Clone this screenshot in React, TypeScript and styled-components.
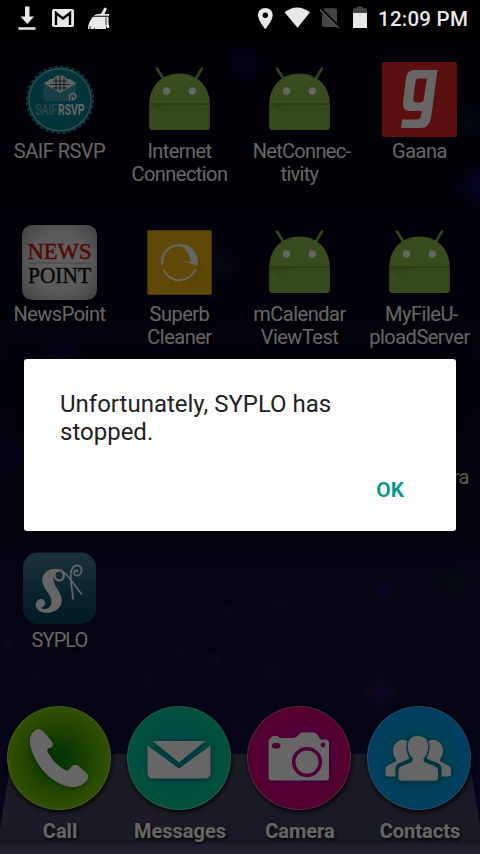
import React from 'react';
import styled, { createGlobalStyle } from 'styled-components';

const GlobalStyle = createGlobalStyle`
  html, body { margin: 0; padding: 0; background: #000; }
  *, *::before, *::after { box-sizing: border-box; }
  svg { display: block; }
`;

const Screen = styled.div`
  position: relative;
  width: 480px;
  height: 854px;
  overflow: hidden;
  display: flex;
  flex-direction: column;
  font-family: Roboto, "Liberation Sans", sans-serif;
  background:
    radial-gradient(circle at 245px 64px, rgba(14, 8, 120, 0.5), transparent 20px),
    radial-gradient(circle at 480px 186px, rgba(14, 8, 150, 0.6), transparent 24px),
    radial-gradient(circle at 470px 122px, rgba(10, 40, 70, 0.4), transparent 22px),
    radial-gradient(circle at 222px 265px, rgba(10, 40, 90, 0.4), transparent 16px),
    radial-gradient(circle at 60px 357px, rgba(20, 12, 110, 0.5), transparent 22px),
    radial-gradient(circle at 18px 457px, rgba(20, 12, 110, 0.5), transparent 20px),
    radial-gradient(circle at 384px 591px, rgba(50, 20, 120, 0.5), transparent 16px),
    radial-gradient(circle at 453px 583px, rgba(14, 50, 60, 0.5), transparent 16px),
    radial-gradient(circle at 282px 603px, rgba(36, 20, 110, 0.5), transparent 13px),
    radial-gradient(circle at 270px 671px, rgba(50, 20, 100, 0.5), transparent 14px),
    radial-gradient(circle at 380px 692px, rgba(60, 20, 130, 0.6), transparent 19px),
    radial-gradient(circle at 235px 731px, rgba(44, 18, 110, 0.4), transparent 14px),
    radial-gradient(circle at 214px 659px, rgba(44, 22, 90, 0.6), transparent 9px),
    radial-gradient(circle at 180px 652px, rgba(40, 22, 80, 0.6), transparent 7px),
    radial-gradient(circle at 150px 680px, rgba(44, 22, 90, 0.6), transparent 9px),
    radial-gradient(circle at 35px 676px, rgba(40, 22, 80, 0.6), transparent 9px),
    radial-gradient(circle at 229px 610px, rgba(40, 22, 80, 0.6), transparent 9px),
    radial-gradient(circle at 8px 646px, rgba(44, 22, 90, 0.6), transparent 8px),
    linear-gradient(#04020f 0, #070518 200px, #0b0922 400px, #0d0c2a 600px, #0f0e34 700px, #100e40 755px, #100e40 100%);
`;

const Floor = styled.svg`
  position: absolute;
  left: 0;
  bottom: 0;
`;

const StatusBar = styled.header`
  position: relative;
  z-index: 3;
  flex: none;
  height: 38px;
  display: flex;
  align-items: center;
  justify-content: space-between;
  background: #000;
`;

const StatusGroup = styled.div`
  display: flex;
  align-items: center;
  height: 38px;
`;

const Clock = styled.span`
  width: 102px;
  font-size: 20.5px;
  font-weight: 500;
  line-height: 38px;
  letter-spacing: 0.25px;
  color: #e8e8e8;
  white-space: nowrap;
`;

const AppGrid = styled.main`
  flex: none;
  height: 668px;
  padding-top: 24px;
  display: grid;
  grid-template-columns: repeat(4, 120px);
  grid-auto-rows: 163px;
`;

const AppCell = styled.div`
  display: flex;
  flex-direction: column;
  align-items: center;
  padding-right: 1px;
`;

const AppIcon = styled.div`
  width: 75px;
  height: 78px;
`;

const AppLabel = styled.span<{ $tight?: number; $edge?: boolean; $indent?: number }>`
  font-size: 20px;
  line-height: 23px;
  color: #fff;
  text-align: center;
  text-indent: ${(p) => p.$indent ?? 0}px;
  white-space: pre;
  letter-spacing: ${(p) => p.$tight ?? -0.5}px;
  align-self: ${(p) => (p.$edge ? 'flex-end' : 'center')};
  padding-right: ${(p) => (p.$edge ? 10 : 0)}px;
  text-shadow: 1px 2px 3px #000;
`;

const Dock = styled.nav`
  position: relative;
  display: grid;
  grid-template-columns: repeat(4, 120px);
`;

const DockItem = styled.div`
  display: flex;
  flex-direction: column;
  align-items: center;
  padding-right: 2px;
`;

const DockButton = styled.div<{ $inner: string; $mid: string; $outer: string }>`
  width: 104px;
  height: 104px;
  border-radius: 50%;
  border: 1px solid rgba(255, 255, 255, 0.35);
  background: radial-gradient(circle, ${(p) => p.$inner} 0, ${(p) => p.$mid} 40%, ${(p) => p.$outer} 70%);
  background-origin: border-box;
  box-shadow: 1px 2px 5px rgba(0, 0, 0, 0.9);
  svg { margin: -1px; filter: drop-shadow(0 1px 2px rgba(0, 0, 0, 0.4)); }
`;

const DockLabel = styled.span`
  margin-top: 10px;
  padding-left: 2px;
  font-size: 20px;
  font-weight: 700;
  line-height: 23px;
  color: #fff;
  text-shadow: 1px 2px 4px #000;
`;

const Scrim = styled.div`
  position: absolute;
  inset: 0;
  z-index: 2;
  background: rgba(0, 0, 0, 0.6);
`;

const Dialog = styled.section`
  position: absolute;
  z-index: 4;
  left: 24px;
  top: 359px;
  width: 432px;
  height: 172px;
  padding: 31px 36px 0;
  display: flex;
  flex-direction: column;
  border-radius: 3px;
  background: #fff;
  box-shadow: 0 6px 20px rgba(0, 0, 0, 0.6);
`;

const DialogMessage = styled.p`
  margin: 0;
  width: 310px;
  font-size: 24px;
  line-height: 28px;
  color: #212121;
`;

const DialogActions = styled.div`
  display: flex;
  justify-content: flex-end;
  margin-top: 26px;
`;

const DialogButton = styled.button`
  border: 0;
  margin: 0;
  padding: 6px 16px 6px 12px;
  background: transparent;
  font-family: inherit;
  font-size: 21px;
  font-weight: 600;
  line-height: 25px;
  color: #009688;
`;

const AndroidIcon = ({ id }: { id: string }) => (
  <svg width="75" height="76" viewBox="0 0 75 76">
    <defs>
      <linearGradient id={id} x1="0" y1="0" x2="1" y2="1">
        <stop offset="0" stopColor="#6f9c38" />
        <stop offset=".55" stopColor="#8bc34a" stopOpacity="0" />
      </linearGradient>
    </defs>
    <path d="M15 6.500 21.500 17M60 6.500 53.500 17" stroke="#7fae45" strokeWidth="2.600" strokeLinecap="round" />
    <path d="M7.300 42C7.300 24 20 11.500 37.500 11.500S67.700 24 67.700 42V64.500Q67.700 68 64 68H11Q7.300 68 7.300 64.500Z" fill="#8cbd4b" />
    <path d="M7.300 42H67.700V64.500Q67.700 68 64 68H11Q7.300 68 7.300 64.500Z" fill="#87b849" />
    <path d="M8 42H67V68H33Z" fill={`url(#${id})`} />
    <path d="M7.300 42H67.700" stroke="#5f8531" strokeWidth="1" />
    <circle cx="24.500" cy="29" r="3.700" fill="#fff" />
    <circle cx="50.300" cy="29" r="3.700" fill="#fff" />
  </svg>
);

const SaifIcon = () => (
  <svg width="75" height="75" viewBox="0 0 75 75">
    <circle cx="38" cy="37.800" r="32.700" fill="#078493" />
    <circle cx="38" cy="37.800" r="32.800" fill="none" stroke="#078493" strokeWidth="3" strokeDasharray="3.400 2.320" />
    <circle cx="38" cy="37.800" r="31" fill="none" stroke="#93c5cc" strokeWidth="1.200" />
    <path d="M21.300 22V36.500Q21.300 39 24 39H51.500Q54 39 54 36.500V22L38 30.500Z" fill="#3f9dac" />
    <path d="M22 21.500 28 17H31L35 13.500H41L45 17H48L54.500 21.500 46 26.500 38 31 30 26.500Z" fill="#f4f4f4" />
    <path d="M31 19H45M28 22.500H48M31 26H45M34 16V28M38 14V29M42 16V28" stroke="#37545a" strokeWidth="1.100" />
    <path d="M47.500 38.500V35Q48 31.500 51 31.500T54 34.500 50.500 37.500M50.500 38.500V34.500" fill="none" stroke="#fff" strokeWidth="1.300" />
    <text x="13" y="53" fontFamily="Roboto, sans-serif" fontSize="14" textLength="22.500" lengthAdjust="spacingAndGlyphs" fill="#7db9c2">SAIF</text>
    <text x="36" y="53" fontFamily="Roboto, sans-serif" fontSize="14" fontWeight="700" textLength="26.500" lengthAdjust="spacingAndGlyphs" fill="#fff">RSVP</text>
  </svg>
);

const GaanaIcon = () => (
  <svg width="75" height="75" viewBox="0 0 75 75">
    <rect width="75" height="75" rx="2" fill="#e02a2b" />
    <path fillRule="evenodd" fill="#fff" d="M32 8H55.500L49 56Q47.300 66 38 66H19L20.200 57.500H34.500Q38.500 57.500 39.200 53L39.800 49H28Q20 49 21 40.500L24 16.500Q25 8 32 8ZM37 16.500Q34 16.500 33.500 19.500L31.300 36.500Q31 40.500 34 40.500H38Q41 40.500 41.700 37.500L45 16.500Z" />
  </svg>
);

const NewsPointIcon = () => (
  <svg width="75" height="75" viewBox="0 0 75 75">
    <defs>
      <radialGradient id="paper" cx=".5" cy=".5" r=".7">
        <stop offset="0" stopColor="#f4f4f4" />
        <stop offset=".6" stopColor="#dedede" />
        <stop offset="1" stopColor="#9b9b9b" />
      </radialGradient>
    </defs>
    <rect width="75" height="75" rx="10" fill="url(#paper)" />
    <text x="5.500" y="33.500" fontFamily="Liberation Serif, serif" fontSize="23.500" textLength="64" lengthAdjust="spacingAndGlyphs" fill="#d8100e" stroke="#d8100e" strokeWidth=".5">NEWS</text>
    <path d="M6 38H69.500" stroke="#aaa" strokeWidth="1.200" />
    <text x="6" y="58" fontFamily="Liberation Serif, serif" fontSize="22.500" textLength="63" lengthAdjust="spacingAndGlyphs" fill="#111" stroke="#111" strokeWidth=".4">POINT</text>
  </svg>
);

const SuperbIcon = () => (
  <svg width="75" height="75" viewBox="0 0 75 75">
    <rect x="5.300" y="5.300" width="64.400" height="64.400" rx="1.500" fill="#efb60f" />
    <path d="M56 35 66 46V58L54 66 38 55Q54 52 56 35Z" fill="#e0a60c" opacity=".5" />
    <path d="M19.300 40A17.500 17.500 0 0 1 37 19.200C49 18.500 57 28 55.800 40.500L38.500 36.200 49 37C47 26 42 21 36 21.300 26 22 21 30 21 40Z" fill="#fff" />
    <path d="M21.500 44.500A17.300 17.300 0 0 0 53.700 44" fill="none" stroke="#fff" strokeWidth="1.900" />
  </svg>
);

const SyploIcon = () => (
  <svg width="75" height="75" viewBox="0 0 75 75">
    <defs>
      <linearGradient id="syplo" x1="0" y1="0" x2="0" y2="1">
        <stop offset="0" stopColor="#467f94" />
        <stop offset=".5" stopColor="#1d5f76" />
        <stop offset="1" stopColor="#03445a" />
      </linearGradient>
    </defs>
    <rect x="1" y="1.500" width="73" height="71.500" rx="15" fill="url(#syplo)" />
    <path d="M38 18.500C29 16 20.300 21 20.300 29C20.300 38 29.500 42.500 29.500 50.500C29.500 57.500 23 60 18.500 56.500C23.500 56.500 25 49.500 20 48C15 47 12.500 52.500 14.500 57C18.500 64 33.500 63.500 38.500 54.500C43.500 44 32 37 31.500 28.500C31.200 23.500 33.500 21 38 20.500Z" fill="#fff" />
    <path d="M33 22C31 28 37 31.500 40.500 28C43.500 24 41 18.800 36 19.300" fill="none" stroke="#fff" strokeWidth="2.100" strokeLinecap="round" />
    <path d="M39 19.500C45 21.500 50 31 59.500 43" fill="none" stroke="#fff" strokeWidth="1.600" strokeLinecap="round" />
    <path d="M51.200 48C50 40 48.500 30 48.800 23C49.500 13.500 57.500 12 59.300 17.500C60.500 24 53.500 27 52 22.500C51.800 19.500 54.500 18.500 55.500 20.500" fill="none" stroke="#fff" strokeWidth="1.700" strokeLinecap="round" />
  </svg>
);

const PhoneGlyph = () => (
  <svg width="104" height="104" viewBox="0 0 104 104">
    <path fill="#fff" d="M26.500 25.500Q32 20.500 37 26L44.500 35Q47 38 44.500 41.500Q39 42 40.800 46.500Q48 59 59 64.500Q61 65 63 62.500Q66 57 71 59.500L79 66.500Q83 70 80 74.500Q73 83 61 80.500Q42 76 30 56Q22 42 23 33.500Q23.500 28 26.500 25.500Z" />
  </svg>
);

const MailGlyph = () => (
  <svg width="104" height="104" viewBox="0 0 104 104">
    <path fill="#fff" d="M25.500 35H78.500L52 56.500ZM20.500 39.500 52 62.500 83.500 39.500V67Q83.500 72.500 78 72.500H26Q20.500 72.500 20.500 67Z" />
  </svg>
);

const CameraGlyph = () => (
  <svg width="104" height="104" viewBox="0 0 104 104">
    <path fill="#fff" d="M26 30H30Q32 30 32.500 32H46Q50 31.500 52.500 27.500Q53.500 26.500 56 26.500H67Q69 26.500 71 29.500L73.500 33.500H79Q82 34 82 37V71.500Q82 74.500 79 74.500H24.500Q21.500 74.500 21.500 71.500V35Q21.500 32.500 24 32Q24.500 30 26 30Z" />
    <rect x="25" y="37" width="8.500" height="5.500" rx="2.700" fill="#d0008a" />
    <circle cx="76" cy="39" r="2.400" fill="#d0008a" />
    <circle cx="60" cy="56" r="13.300" fill="#fff" stroke="#c8008e" strokeWidth="3.600" />
  </svg>
);

const PeopleGlyph = () => (
  <svg width="104" height="104" viewBox="0 0 104 104">
    <g fill="#fff">
      <path d="M41 36Q36 31.500 30 36Q23.500 42 27.500 51Q30 54 28.500 55.500L20 60Q18.500 61 18.500 63.500V68Q18.500 70.500 21 70.500H28.500V61.500Q29 58.500 33 57L42.500 52.500Q38 45 41 36Z" />
      <path d="M60.500 36Q66 31.500 72 36Q78.500 42 74.500 51Q72 54 73.500 55.500L82 60Q84 61 84 63.500V68Q84 70.500 81.500 70.500H74.500V61.500Q74 58.500 70 57L59.500 52.500Q64 45 60.500 36Z" />
      <path stroke="#0098b8" strokeWidth="3" paintOrder="stroke" d="M51 30C43 30 40 36 41 43Q42 49 45.500 52Q46.500 55 44 56.500L34 60.500Q31.500 62 31.500 65V71.500Q31.500 74.500 34.500 74.500H68Q71 74.500 71 71.500V65Q71 62 68.500 60.500L58 56.500Q55.500 55 57 52Q60 49 61 43C62 36 59 30 51 30Z" />
    </g>
  </svg>
);

const NotificationIcons = () => (
  <svg width="120" height="38" viewBox="0 0 120 38" fill="#e8e8e8">
    <path d="M25 6.500H29.500V16.500H34L27.300 24 20.500 16.500H25ZM18.500 27.300H35.500V29.800H18.500Z" />
    <rect x="52" y="9" width="22" height="18" rx="2" />
    <path d="M56 25V13L63 18.500 70 13V25" fill="none" stroke="#000" strokeWidth="2.400" />
    <path d="M104.500 7.500 107 8.500 104.500 14H109V15.800H93.500Q96 13.500 101 13.700ZM93 16.800H108.500V23L109.500 28H107L106 25.500V29H95L94.500 27.500 93.500 29H88Q88 22 93 16.800Z" />
    <path d="M106 17.500V25M90 26V29" stroke="#333" strokeWidth="1" />
  </svg>
);

const SystemIcons = () => (
  <svg width="120" height="38" viewBox="0 0 120 38" fill="#e8e8e8">
    <path fillRule="evenodd" d="M7.300 8C3 8 0 11 0 15.200C0 20.500 7.300 29 7.300 29S14.700 20.500 14.700 15.200C14.700 11 11.600 8 7.300 8ZM7.300 12.600A2.700 2.700 0 1 1 7.300 18A2.700 2.700 0 1 1 7.300 12.600Z" />
    <path d="M26.500 12.300Q39 2.500 52 12.300L39.500 27.800Z" />
    <path d="M66 8.300H77Q79 8.300 79 10.300V25Q79 27 77 27H66Q64 27 64 25V14Z" fill="#444" />
    <path d="M63.500 9.500 81 27" stroke="#000" strokeWidth="2.500" />
    <path d="M62 9.500 80.500 28" stroke="#555" strokeWidth="1.600" />
    <path d="M99 6.500H104.500V8.300H109V13H95V8.300H99Z" fill="#444" />
    <path d="M95 13H109V28H95Z" />
  </svg>
);

type App = { label: string; icon?: React.ReactNode; tight?: number; edge?: boolean; indent?: number };

const apps: App[] = [
  { label: 'SAIF RSVP', icon: <SaifIcon />, tight: -0.5 },
  { label: 'Internet\nConnection', icon: <AndroidIcon id="fold-a" />, tight: -0.55 },
  { label: 'NetConnec-\ntivity', icon: <AndroidIcon id="fold-b" />, tight: -0.7, indent: 4 },
  { label: 'Gaana', icon: <GaanaIcon /> },
  { label: 'NewsPoint', icon: <NewsPointIcon /> },
  { label: 'Superb\nCleaner', icon: <SuperbIcon /> },
  { label: 'mCalendar\nViewTest', icon: <AndroidIcon id="fold-c" /> },
  { label: 'MyFileU-\nploadServer', icon: <AndroidIcon id="fold-d" />, indent: 4 },
  { label: '' },
  { label: '' },
  { label: '' },
  { label: 'ra', edge: true },
  { label: 'SYPLO', icon: <SyploIcon />, tight: -0.9 },
];

const dock = [
  { label: 'Call', inner: '#008010', mid: '#4aa800', outer: '#7cc800', glyph: <PhoneGlyph /> },
  { label: 'Messages', inner: '#009cc0', mid: '#00bca4', outer: '#00cc90', glyph: <MailGlyph /> },
  { label: 'Camera', inner: '#cc00b8', mid: '#d40098', outer: '#d0006e', glyph: <CameraGlyph /> },
  { label: 'Contacts', inner: '#00acac', mid: '#00a4d8', outer: '#009cf4', glyph: <PeopleGlyph /> },
];

export default function App() {
  return (
    <>
      <GlobalStyle />
      <Screen>
        <Floor width="480" height="100" viewBox="0 0 480 100">
          <path d="M12 0H468L480 70V100H0V76Z" fill="#42435a" />
          <path d="M190 75Q225 65 252 42T330 0H12L0 76Z" fill="#484a60" opacity=".5" />
          <path d="M0 90H480V100H0Z" fill="#50526f" />
        </Floor>
        <StatusBar>
          <StatusGroup><NotificationIcons /></StatusGroup>
          <StatusGroup>
            <SystemIcons />
            <Clock>12:09 PM</Clock>
          </StatusGroup>
        </StatusBar>
        <AppGrid>
          {apps.map((app, i) => (
            <AppCell key={i}>
              <AppIcon>{app.icon}</AppIcon>
              <AppLabel $tight={app.tight} $edge={app.edge} $indent={app.indent}>{app.label}</AppLabel>
            </AppCell>
          ))}
        </AppGrid>
        <Dock>
          {dock.map((d) => (
            <DockItem key={d.label}>
              <DockButton $inner={d.inner} $mid={d.mid} $outer={d.outer}>{d.glyph}</DockButton>
              <DockLabel>{d.label}</DockLabel>
            </DockItem>
          ))}
        </Dock>
        <Scrim />
        <Dialog role="alertdialog">
          <DialogMessage>Unfortunately, SYPLO has stopped.</DialogMessage>
          <DialogActions><DialogButton>OK</DialogButton></DialogActions>
        </Dialog>
      </Screen>
    </>
  );
}
